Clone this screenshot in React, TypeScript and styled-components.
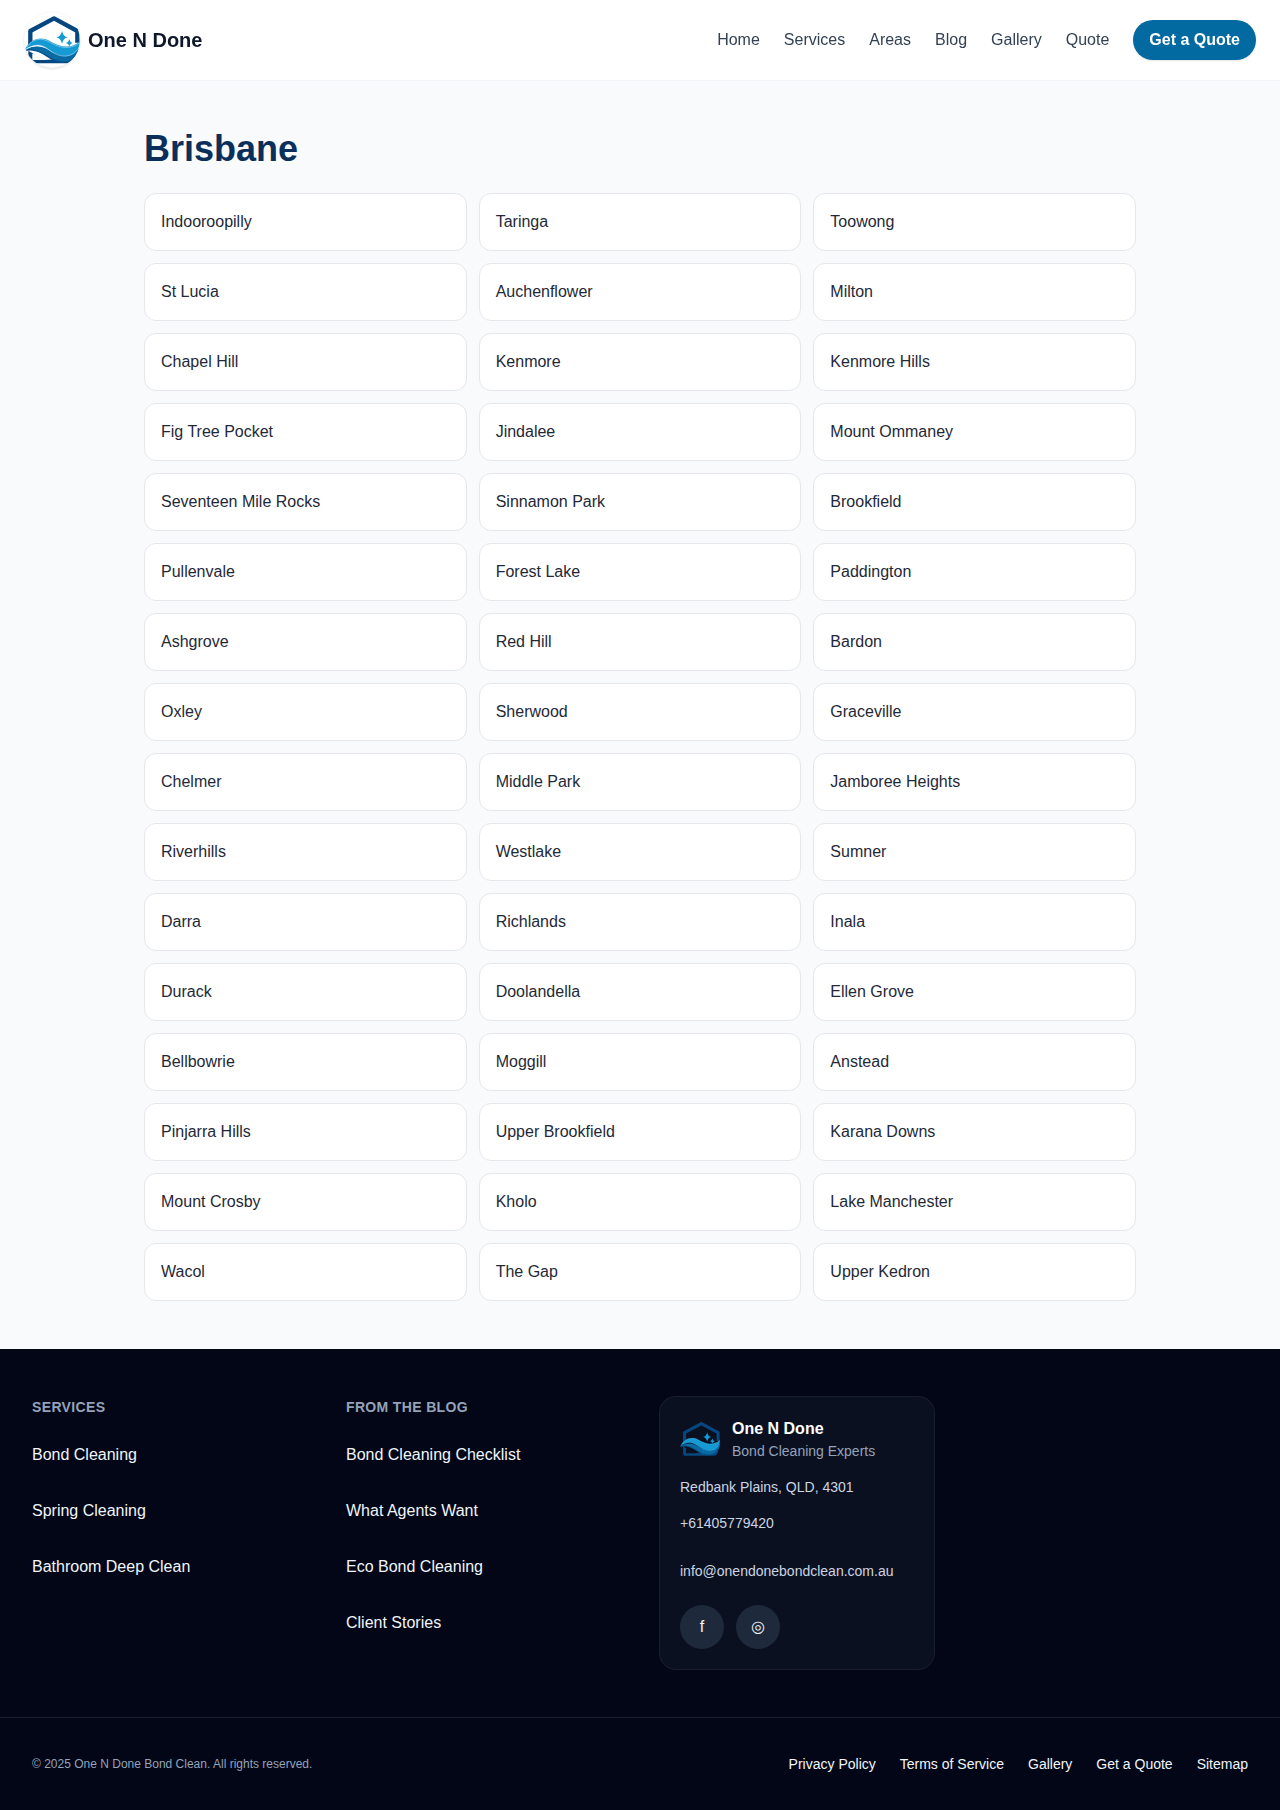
import React from "react";
import styled, { createGlobalStyle } from "styled-components";

const GlobalStyle = createGlobalStyle`
  *, *::before, *::after { box-sizing: border-box; }
  body {
    margin: 0;
    background: #f8fafc;
    color: #0f172a;
    font-family: "Liberation Sans", Arial, sans-serif;
    font-size: 16px;
    line-height: 24px;
  }
  a { color: inherit; text-decoration: none; }
  h1, h2, p, ul { margin: 0; padding: 0; }
  ul { list-style: none; }
`;

const Header = styled.header`
  display: flex;
  align-items: center;
  justify-content: space-between;
  height: 81px;
  padding: 0 24px;
  background: rgba(255, 255, 255, 0.95);
  border-bottom: 1px solid #f1f5f9;
  backdrop-filter: blur(8px);
`;

const Brand = styled.a`
  display: flex;
  align-items: center;
  gap: 8px;
  font-size: 20px;
  line-height: 28px;
  font-weight: 700;
`;

const LogoImage = styled.svg<{ $size: number; $round?: boolean }>`
  display: block;
  flex: none;
  width: ${(p) => p.$size}px;
  height: ${(p) => p.$size}px;
  overflow: hidden;
  border-radius: ${(p) => (p.$round ? "50%" : "0")};
  background: ${(p) => (p.$round ? "#ffffff" : "transparent")};
  box-shadow: ${(p) =>
    p.$round
      ? "0 1px 3px rgba(0, 0, 0, 0.1), 0 1px 2px -1px rgba(0, 0, 0, 0.1)"
      : "none"};
`;

const Nav = styled.nav`
  display: flex;
  align-items: center;
  gap: 24px;
  color: #334155;
`;

const QuoteButton = styled.a`
  padding: 8px 16px;
  border-radius: 20px;
  background: #0369a1;
  color: #ffffff;
  font-weight: 600;
  box-shadow: 0 1px 2px rgba(0, 0, 0, 0.1);
`;

const Main = styled.main`
  max-width: 1024px;
  margin: 0 auto;
  padding: 48px 16px;
`;

const Title = styled.h1`
  margin-bottom: 24px;
  color: #0b2f5b;
  font-size: 36px;
  line-height: 40px;
  font-weight: 700;
`;

const SuburbGrid = styled.ul`
  display: grid;
  grid-template-columns: repeat(3, minmax(0, 1fr));
  gap: 12px;
`;

const SuburbCard = styled.a`
  display: block;
  padding: 16px;
  border: 1px solid #e5e7eb;
  border-radius: 12px;
  background: #ffffff;
  color: #1f2937;
`;

const Footer = styled.footer`
  background: #020617;
  color: #f1f5f9;
`;

const FooterGrid = styled.div`
  display: grid;
  grid-template-columns: repeat(4, minmax(0, 1fr));
  gap: 40px;
  padding: 48px 32px;
`;

const ColumnTitle = styled.h2`
  margin-bottom: 16px;
  color: #94a3b8;
  font-size: 14px;
  line-height: 20px;
  font-weight: 600;
  letter-spacing: 0.025em;
  text-transform: uppercase;
`;

const LinkList = styled.ul`
  display: grid;
  gap: 12px;
`;

const TapLink = styled.a`
  display: flex;
  align-items: center;
  min-height: 44px;
`;

const ContactCard = styled.section`
  padding: 20px;
  border-radius: 16px;
  background: #0b1021;
  box-shadow: 0 0 0 1px #1a1d2d;
`;

const ContactHead = styled.div`
  display: flex;
  align-items: center;
  gap: 12px;
  margin-bottom: 16px;
`;

const ContactName = styled.p`
  color: #ffffff;
  font-weight: 600;
`;

const ContactTagline = styled.p`
  color: #94a3b8;
  font-size: 14px;
  line-height: 20px;
`;

const ContactLines = styled.div`
  display: grid;
  gap: 4px;
  color: #cbd5e1;
  font-size: 14px;
  line-height: 20px;
`;

const SocialRow = styled.div`
  display: flex;
  gap: 12px;
  margin-top: 12px;
`;

const SocialLink = styled.a`
  display: grid;
  place-items: center;
  width: 44px;
  height: 44px;
  border-radius: 50%;
  background: #1e293b;
`;

const LegalBar = styled.div`
  display: flex;
  align-items: center;
  justify-content: space-between;
  padding: 24px 32px;
  border-top: 1px solid rgba(255, 255, 255, 0.1);
`;

const Copyright = styled.p`
  color: #94a3b8;
  font-size: 12px;
  line-height: 16px;
`;

const LegalLinks = styled.nav`
  display: flex;
  gap: 24px;
  font-size: 14px;
  line-height: 20px;
`;

function Logo({ size, round }: { size: number; round?: boolean }) {
  return (
    <LogoImage $size={size} $round={round} viewBox="0 0 168 168" role="img" aria-label="One N Done logo">
      <path d="M19 102V57L90 19L160 57V92" fill="none" stroke="#07477f" strokeWidth="13" strokeLinejoin="round" />
      <path d="M13 116V146Q13 154 21 154H142Q158 153 161 132L150 138L60 144L13 116Z" fill="#07477f" />
      <path d="M25 125C39 126 49 134 62 144H25Z" fill={round ? "#ffffff" : "#0b1021"} />
      <path d="M0 118C16 102 46 100 68 112C104 134 140 138 168 106C164 142 138 156 108 152C76 147 58 119 26 116Q10 115 0 118Z" fill="#07528c" />
      <path d="M12 110C34 100 56 102 74 114C106 138 142 138 168 106C162 140 136 152 106 147C74 140 58 112 12 110Z" fill="#0869a3" />
      <path d="M2 114C14 86 46 70 76 86C110 107 142 111 168 88C167 118 148 134 122 133C86 130 70 102 42 99Q18 100 2 114Z" fill="#159ad3" />
      <path d="M8 107C24 80 52 74 80 92C110 110 142 113 168 91" fill="none" stroke={round ? "#cdeaf7" : "#35a6d6"} strokeWidth="1.5" />
      <path d="M2 115C22 98 48 94 68 108C102 138 142 144 168 104" fill="none" stroke={round ? "#cdeaf7" : "#35a6d6"} strokeWidth="1.5" />
      <path d="M114 56Q117 73 131 76Q117 79 114 96Q111 79 97 76Q111 73 114 56Z" fill="#149bd2" />
      <path d="M136 82Q138 91 146 93Q138 95 136 103Q134 95 126 93Q134 91 136 82Z" fill="#149bd2" />
    </LogoImage>
  );
}

const navItems = ["Home", "Services", "Areas", "Blog", "Gallery", "Quote"];

const suburbs = [
  "Indooroopilly", "Taringa", "Toowong",
  "St Lucia", "Auchenflower", "Milton",
  "Chapel Hill", "Kenmore", "Kenmore Hills",
  "Fig Tree Pocket", "Jindalee", "Mount Ommaney",
  "Seventeen Mile Rocks", "Sinnamon Park", "Brookfield",
  "Pullenvale", "Forest Lake", "Paddington",
  "Ashgrove", "Red Hill", "Bardon",
  "Oxley", "Sherwood", "Graceville",
  "Chelmer", "Middle Park", "Jamboree Heights",
  "Riverhills", "Westlake", "Sumner",
  "Darra", "Richlands", "Inala",
  "Durack", "Doolandella", "Ellen Grove",
  "Bellbowrie", "Moggill", "Anstead",
  "Pinjarra Hills", "Upper Brookfield", "Karana Downs",
  "Mount Crosby", "Kholo", "Lake Manchester",
  "Wacol", "The Gap", "Upper Kedron",
];

const footerColumns = [
  { title: "Services", links: ["Bond Cleaning", "Spring Cleaning", "Bathroom Deep Clean"] },
  {
    title: "From the blog",
    links: ["Bond Cleaning Checklist", "What Agents Want", "Eco Bond Cleaning", "Client Stories"],
  },
];

const legalItems = ["Privacy Policy", "Terms of Service", "Gallery", "Get a Quote", "Sitemap"];

export default function App() {
  return (
    <>
      <GlobalStyle />
      <Header>
        <Brand href="#">
          <Logo size={56} round />
          <span>One N Done</span>
        </Brand>
        <Nav>
          {navItems.map((item) => (
            <a key={item} href="#">{item}</a>
          ))}
          <QuoteButton href="#">Get a Quote</QuoteButton>
        </Nav>
      </Header>

      <Main>
        <Title>Brisbane</Title>
        <SuburbGrid>
          {suburbs.map((name) => (
            <li key={name}>
              <SuburbCard href="#">{name}</SuburbCard>
            </li>
          ))}
        </SuburbGrid>
      </Main>

      <Footer>
        <FooterGrid>
          {footerColumns.map((column) => (
            <section key={column.title}>
              <ColumnTitle>{column.title}</ColumnTitle>
              <LinkList>
                {column.links.map((link) => (
                  <li key={link}>
                    <TapLink href="#">{link}</TapLink>
                  </li>
                ))}
              </LinkList>
            </section>
          ))}
          <ContactCard>
            <ContactHead>
              <Logo size={40} />
              <div>
                <ContactName>One N Done</ContactName>
                <ContactTagline>Bond Cleaning Experts</ContactTagline>
              </div>
            </ContactHead>
            <ContactLines>
              <p>Redbank Plains, QLD, 4301</p>
              <TapLink href="#">+61405779420</TapLink>
              <TapLink href="#">info@onendonebondclean.com.au</TapLink>
            </ContactLines>
            <SocialRow>
              <SocialLink href="#" aria-label="Facebook">f</SocialLink>
              <SocialLink href="#" aria-label="Instagram">◎</SocialLink>
            </SocialRow>
          </ContactCard>
        </FooterGrid>
        <LegalBar>
          <Copyright>© 2025 One N Done Bond Clean. All rights reserved.</Copyright>
          <LegalLinks>
            {legalItems.map((item) => (
              <TapLink key={item} href="#">{item}</TapLink>
            ))}
          </LegalLinks>
        </LegalBar>
      </Footer>
    </>
  );
}
